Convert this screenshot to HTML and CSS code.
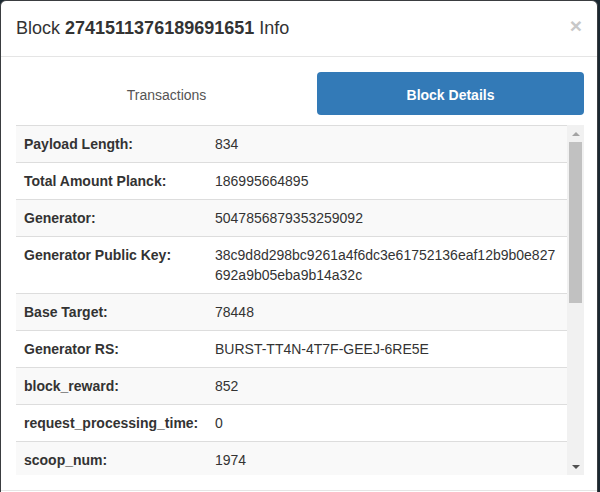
FILE: index.html
```html
<!DOCTYPE html>
<html lang="en">
<head>
<meta charset="utf-8">
<title>Block Info</title>
<link rel="stylesheet" href="styles.css">
</head>
<body>
<div class="modal">
  <div class="modal-header">
    <h4 class="modal-title">Block <strong>2741511376189691651</strong> Info</h4>
    <button class="close" type="button">×</button>
  </div>
  <div class="modal-body">
    <ul class="tabs">
      <li class="tab tab-tx">Transactions</li>
      <li class="tab tab-details active">Block Details</li>
    </ul>
    <div class="scroller">
      <div class="viewport">
        <table class="details">
          <tbody>
            <tr><td class="label">Payload Length:</td><td class="value">834</td></tr>
            <tr><td class="label">Total Amount Planck:</td><td class="value">186995664895</td></tr>
            <tr><td class="label">Generator:</td><td class="value">5047856879353259092</td></tr>
            <tr><td class="label">Generator Public Key:</td><td class="value key">38c9d8d298bc9261a4f6dc3e61752136eaf12b9b0e827692a9b05eba9b14a32c</td></tr>
            <tr><td class="label">Base Target:</td><td class="value">78448</td></tr>
            <tr><td class="label">Generator RS:</td><td class="value">BURST-TT4N-4T7F-GEEJ-6RE5E</td></tr>
            <tr><td class="label">block_reward:</td><td class="value">852</td></tr>
            <tr><td class="label">request_processing_time:</td><td class="value">0</td></tr>
            <tr><td class="label">scoop_num:</td><td class="value">1974</td></tr>
          </tbody>
        </table>
      </div>
      <div class="scrollbar">
        <div class="sb-btn"><span class="arrow-up"></span></div>
        <div class="thumb"></div>
        <div class="sb-fill"></div>
        <div class="sb-btn"><span class="arrow-down"></span></div>
      </div>
    </div>
  </div>
  <div class="modal-footer"></div>
</div>
</body>
</html>
```

FILE: styles.css
```css
html, body {
  margin: 0;
  padding: 0;
  height: 100%;
  overflow: hidden;
}
body {
  background: #1b2830;
  font-family: "Liberation Sans", Arial, Helvetica, sans-serif;
  font-size: 14px;
  line-height: 20px;
  color: #333;
}
.modal {
  width: 596px;
  min-height: 560px;
  background: #fff;
  border: 1px solid #3a3d40;
  border-radius: 6px;
}
.modal-header {
  display: flex;
  justify-content: space-between;
  align-items: flex-start;
  padding: 15px;
  border-bottom: 1px solid #e5e5e5;
}
.modal-title {
  margin: 0;
  font-size: 18px;
  line-height: 25px;
  font-weight: normal;
  color: #333;
}
.modal-title strong {
  font-weight: bold;
}
.close {
  margin: -1px 0 0;
  padding: 0;
  border: 0;
  background: transparent;
  font-family: "Liberation Sans", Arial, sans-serif;
  font-size: 21px;
  font-weight: bold;
  line-height: 21px;
  color: #c8c8c8;
  cursor: pointer;
}
.modal-body {
  padding: 15px 13px 15px 15px;
}
.tabs {
  display: grid;
  grid-template-columns: 301px 267px;
  margin: 0 0 10px;
  padding: 0;
  list-style: none;
}
.tab {
  height: 43px;
  box-sizing: border-box;
  padding: 13px 15px 10px;
  text-align: center;
  color: #555;
  border-radius: 4px;
}
.tab.active {
  background: #337ab7;
  color: #fff;
  font-weight: bold;
}
.scroller {
  display: flex;
  height: 350px;
}
.viewport {
  flex: 1;
  overflow: hidden;
}
.details {
  width: 100%;
  border-collapse: collapse;
  border-spacing: 0;
}
.details td {
  padding: 8px;
  border-top: 1px solid #ddd;
  vertical-align: top;
}
.details tr:nth-child(odd) {
  background: #f9f9f9;
}
.details .label {
  width: 175px;
  font-weight: bold;
  white-space: nowrap;
}
.details .key {
  word-break: break-all;
}
.scrollbar {
  width: 17px;
  display: flex;
  flex-direction: column;
  background: #f1f1f1;
}
.sb-btn {
  height: 17px;
  display: flex;
  align-items: center;
  justify-content: center;
}
.arrow-up {
  width: 0;
  height: 0;
  border-left: 4px solid transparent;
  border-right: 4px solid transparent;
  border-bottom: 4px solid #a3a3a3;
}
.arrow-down {
  width: 0;
  height: 0;
  border-left: 4px solid transparent;
  border-right: 4px solid transparent;
  border-top: 4px solid #505050;
}
.thumb {
  height: 161px;
  margin: 0 2px;
  background: #c1c1c1;
}
.sb-fill {
  flex: 1;
}
.modal-footer {
  border-top: 1px solid #e5e5e5;
  height: 60px;
}
```
